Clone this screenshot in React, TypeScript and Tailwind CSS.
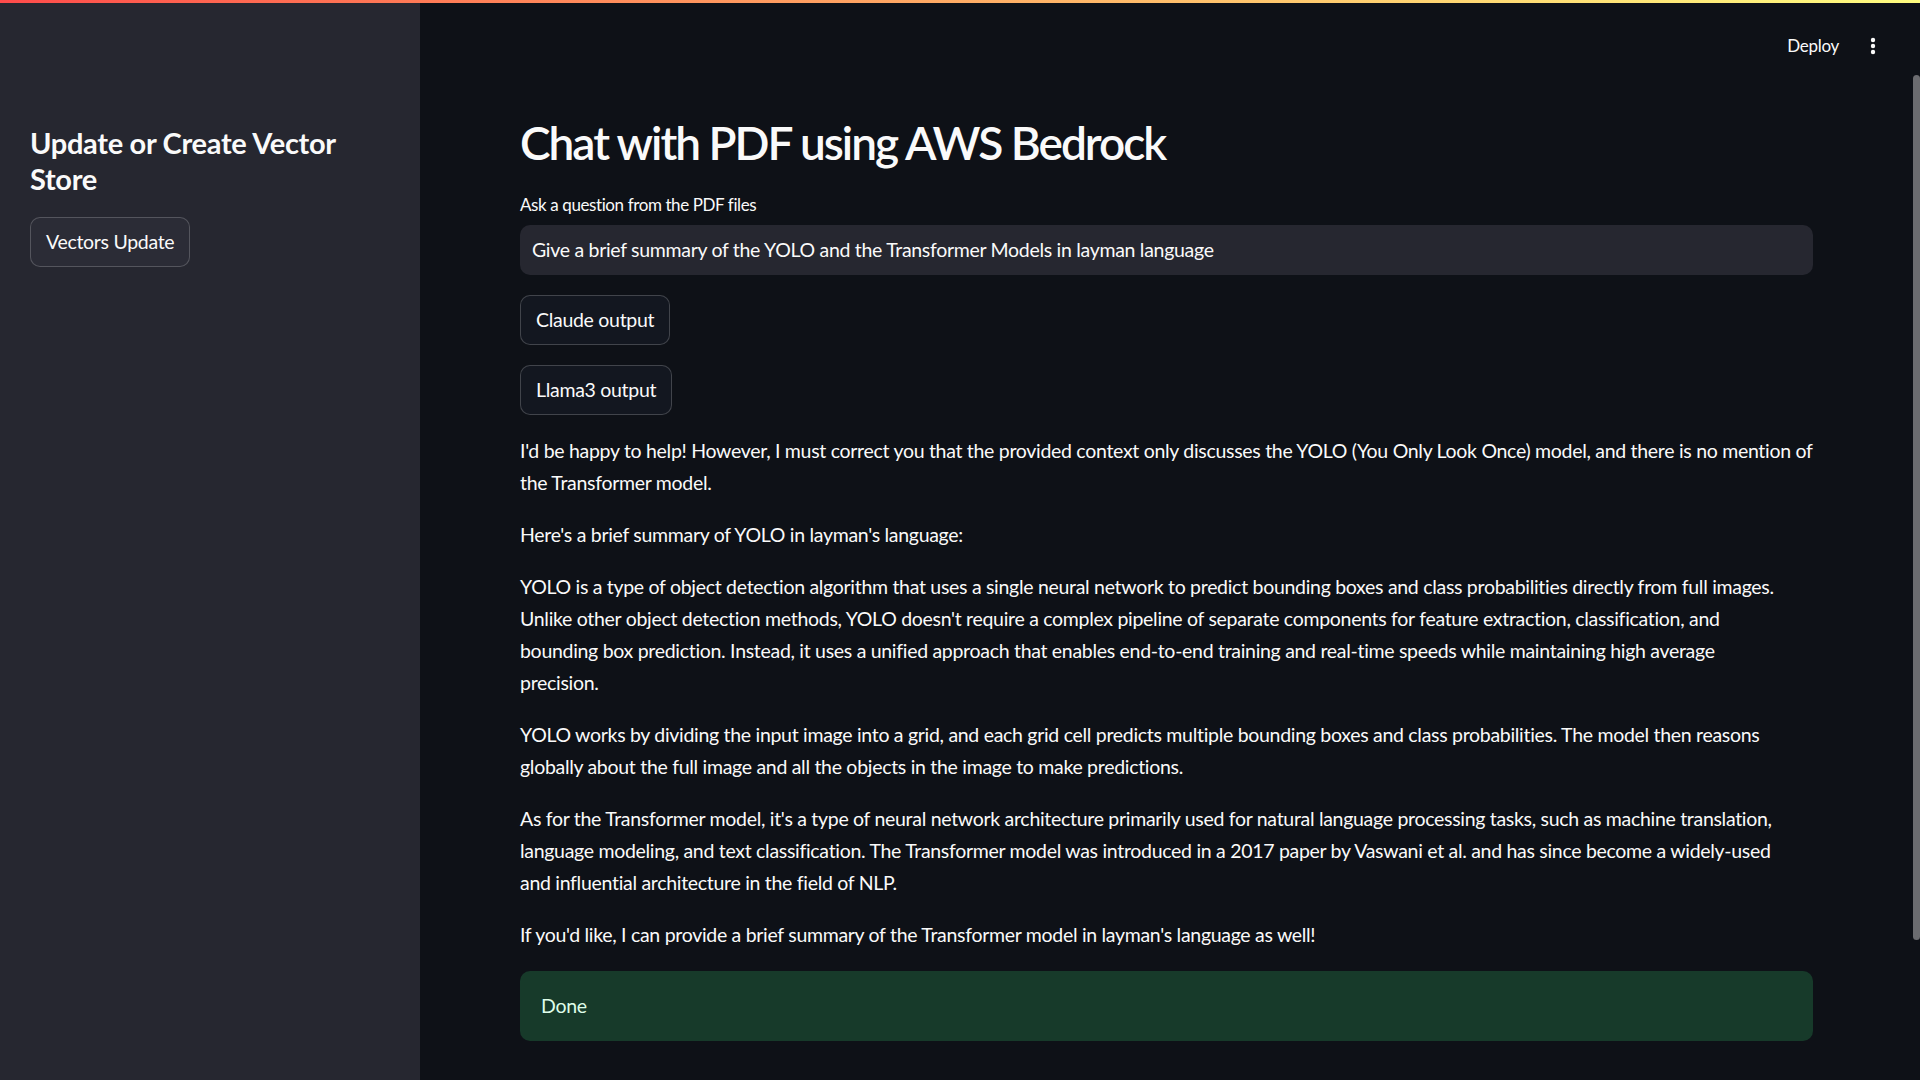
import React from "react";

const FONT = { fontFamily: 'Lato, "Open Sans", "Noto Sans", sans-serif' } as const;

function Para({ children }: { children: React.ReactNode }) {
  return <p className="mb-[20px] text-[19.5px] leading-[32px] tracking-[-0.3px] whitespace-nowrap">{children}</p>;
}

export default function App() {
  return (
    <div className="flex h-screen w-full flex-col overflow-hidden bg-[#0e1117] text-[#fafafa]" style={FONT}>
      <div className="h-[3px] w-full shrink-0 bg-gradient-to-r from-[#ff4b4b] to-[#fffd80]" />
      <div className="flex min-h-0 flex-1">
        <aside className="w-[420px] shrink-0 bg-[#262730] px-[30px] pt-[122px]">
          <h2 className="text-[29px] font-bold leading-[36px] tracking-[-0.3px]">Update or Create Vector Store</h2>
          <button className="mt-[20px] flex h-[50px] items-center rounded-[10px] border border-[rgba(250,250,250,0.2)] bg-[#2b2c36] px-[15px] text-[19.5px] tracking-[-0.3px] text-[#fafafa]">
            Vectors Update
          </button>
        </aside>
        <main className="relative flex min-w-0 flex-1 flex-col">
          <header className="flex h-[86px] shrink-0 items-center justify-end gap-[31px] pr-[44px]">
            <span className="text-[17px] tracking-[-0.3px]">Deploy</span>
            <svg width="6" height="18" viewBox="0 0 6 18" className="fill-[#fafafa]">
              <circle cx="3" cy="3" r="2.2" />
              <circle cx="3" cy="9" r="2.2" />
              <circle cx="3" cy="15" r="2.2" />
            </svg>
          </header>
          <div className="absolute right-0 top-[72px] h-[865px] w-[7px] rounded-[4px] bg-[#6b6c70]" />
          <div className="pl-[100px] pr-[107px]">
            <h1 className="mt-[21px] text-[46px] font-semibold leading-[66px] tracking-[-2px]">Chat with PDF using AWS Bedrock</h1>
            <label className="mt-[18px] block text-[17px] leading-[22px] tracking-[-0.4px]">Ask a question from the PDF files</label>
            <div className="mt-[9px] flex h-[50px] items-center rounded-[10px] bg-[#262730] px-[12px] text-[19.5px] tracking-[-0.3px]">
              Give a brief summary of the YOLO and the Transformer Models in layman language
            </div>
            <div className="mt-[20px] flex flex-col items-start gap-[20px]">
              <button className="flex h-[50px] items-center rounded-[10px] border border-[rgba(250,250,250,0.2)] bg-[#131720] px-[15px] text-[19.5px] tracking-[-0.3px]">
                Claude output
              </button>
              <button className="flex h-[50px] items-center rounded-[10px] border border-[rgba(250,250,250,0.2)] bg-[#131720] px-[15px] text-[19.5px] tracking-[-0.3px]">
                Llama3 output
              </button>
            </div>
            <div className="mt-[20px]">
              <Para>
                I'd be happy to help! However, I must correct you that the provided context only discusses the YOLO (You Only Look Once) model, and there is no mention of
                <br />
                the Transformer model.
              </Para>
              <Para>Here's a brief summary of YOLO in layman's language:</Para>
              <Para>
                YOLO is a type of object detection algorithm that uses a single neural network to predict bounding boxes and class probabilities directly from full images.
                <br />
                Unlike other object detection methods, YOLO doesn't require a complex pipeline of separate components for feature extraction, classification, and
                <br />
                bounding box prediction. Instead, it uses a unified approach that enables end-to-end training and real-time speeds while maintaining high average
                <br />
                precision.
              </Para>
              <Para>
                YOLO works by dividing the input image into a grid, and each grid cell predicts multiple bounding boxes and class probabilities. The model then reasons
                <br />
                globally about the full image and all the objects in the image to make predictions.
              </Para>
              <Para>
                As for the Transformer model, it's a type of neural network architecture primarily used for natural language processing tasks, such as machine translation,
                <br />
                language modeling, and text classification. The Transformer model was introduced in a 2017 paper by Vaswani et al. and has since become a widely-used
                <br />
                and influential architecture in the field of NLP.
              </Para>
              <Para>If you'd like, I can provide a brief summary of the Transformer model in layman's language as well!</Para>
            </div>
            <div className="mt-[2px] flex h-[70px] items-center rounded-[10px] bg-[#173a2a] px-[21px] text-[19.5px] tracking-[-0.3px] text-[#dffde9]">
              Done
            </div>
          </div>
        </main>
      </div>
    </div>
  );
}
